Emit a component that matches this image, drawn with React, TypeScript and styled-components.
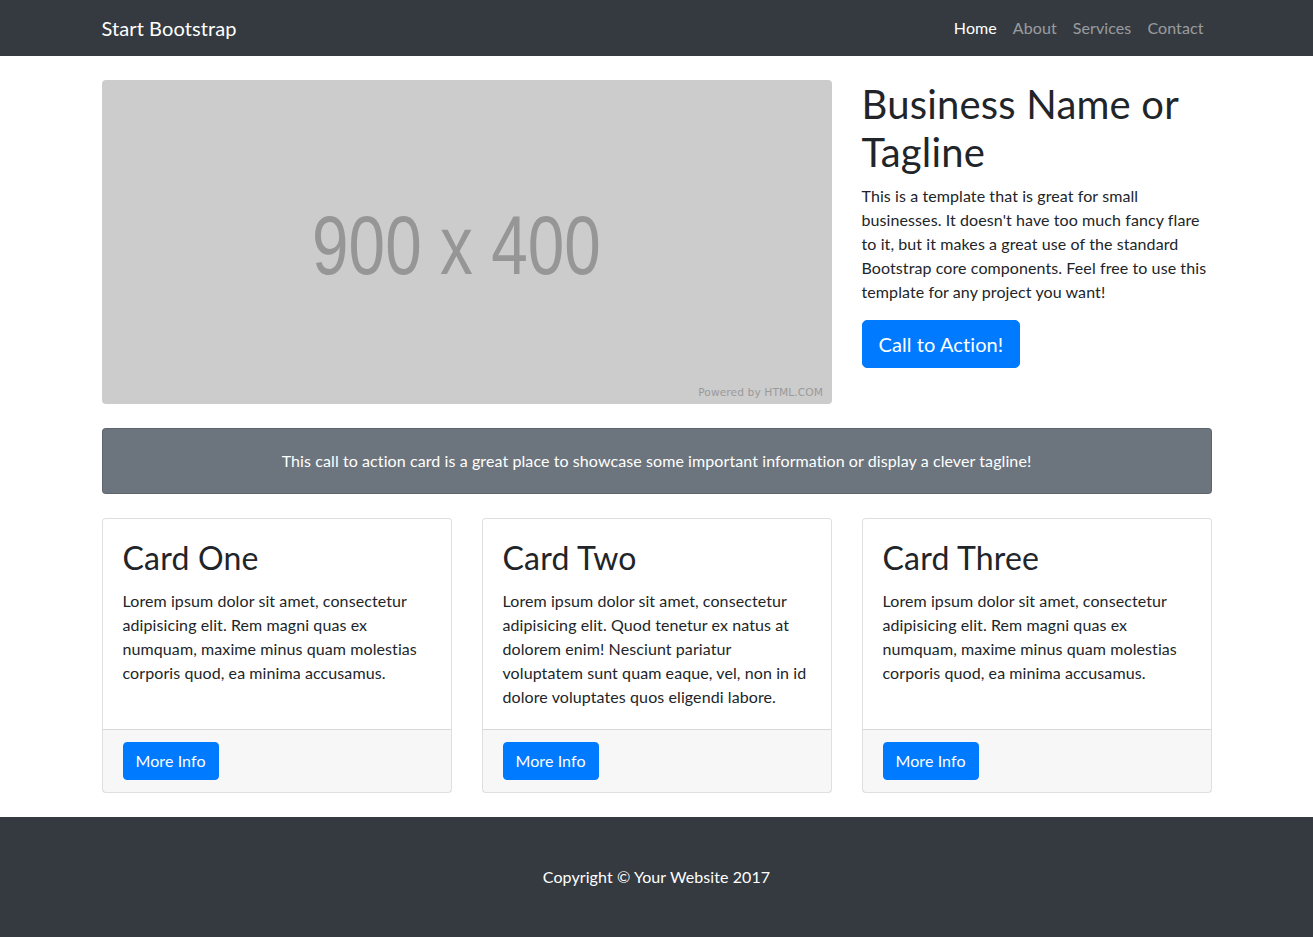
import React from 'react';
import styled, { createGlobalStyle } from 'styled-components';

const GlobalStyle = createGlobalStyle`
  html, body {
    margin: 0;
    padding: 0;
  }
  body {
    font-family: Lato, "Noto Sans", "Liberation Sans", sans-serif;
    font-size: 16px;
    line-height: 1.5;
    letter-spacing: 0.09px;
    color: #212529;
    background: #fff;
  }
  * {
    box-sizing: border-box;
  }
`;

const Container = styled.div`
  width: 1140px;
  margin: 0 auto;
  padding: 0 15px;
`;

const Navbar = styled.nav`
  background: #343a40;
  padding: 8px 0;
`;

const NavInner = styled(Container)`
  display: flex;
  align-items: center;
  justify-content: space-between;
`;

const Brand = styled.a`
  padding: 5px 0;
  color: #fff;
  font-size: 20px;
  line-height: 30px;
  text-decoration: none;
`;

const NavList = styled.ul`
  display: flex;
  margin: 0;
  padding: 0;
  list-style: none;
`;

const NavLink = styled.a<{ active?: boolean }>`
  display: block;
  padding: 8px;
  color: ${({ active }) => (active ? '#fff' : 'rgba(255, 255, 255, 0.5)')};
  font-size: 16px;
  line-height: 24px;
  text-decoration: none;
`;

const HeroRow = styled.div`
  display: grid;
  grid-template-columns: 730px 350px;
  gap: 30px;
  margin: 24px 0;
  align-items: start;
`;

const Placeholder = styled.svg`
  display: block;
  width: 730px;
  height: 324px;
  border-radius: 4px;
`;

const Heading = styled.h1`
  margin: 0 0 8px;
  font-size: 40px;
  font-weight: 400;
  line-height: 1.2;
  letter-spacing: 0.2px;
`;

const Lead = styled.p`
  margin: 0 0 16px;
  font-size: 16px;
  line-height: 24px;
`;

const Button = styled.a<{ large?: boolean }>`
  display: inline-block;
  padding: ${({ large }) => (large ? '8px 16px' : '6px 12px')};
  border: 1px solid #007bff;
  border-radius: ${({ large }) => (large ? '5px' : '4px')};
  background: #007bff;
  color: #fff;
  font-size: ${({ large }) => (large ? '20px' : '16px')};
  line-height: ${({ large }) => (large ? '30px' : '24px')};
  text-decoration: none;
`;

const Callout = styled.div`
  margin: 24px 0;
  padding: 20px;
  border: 1px solid rgba(0, 0, 0, 0.125);
  border-radius: 4px;
  background: #6c757d;
  color: #fff;
  text-align: center;

  p {
    margin: 0;
  }
`;

const CardRow = styled.div`
  display: grid;
  grid-template-columns: repeat(3, 1fr);
  gap: 30px;
  margin-bottom: 24px;
`;

const Card = styled.div`
  display: flex;
  flex-direction: column;
  border: 1px solid rgba(0, 0, 0, 0.125);
  border-radius: 4px;
  background: #fff;
`;

const CardBody = styled.div`
  flex: 1;
  padding: 20px;
`;

const CardTitle = styled.h2`
  margin: 0 0 12px;
  font-size: 32px;
  font-weight: 400;
  line-height: 1.2;
  letter-spacing: 0.2px;
`;

const CardText = styled.p`
  margin: 0;
`;

const CardFooter = styled.div`
  padding: 12px 20px;
  border-top: 1px solid rgba(0, 0, 0, 0.125);
  background: rgba(0, 0, 0, 0.03);
`;

const Footer = styled.footer`
  padding: 48px 0;
  background: #343a40;
  color: #fff;
  text-align: center;

  p {
    margin: 0;
  }
`;

const cards = [
  {
    title: 'Card One',
    text: 'Lorem ipsum dolor sit amet, consectetur adipisicing elit. Rem magni quas ex numquam, maxime minus quam molestias corporis quod, ea minima accusamus.',
  },
  {
    title: 'Card Two',
    text: 'Lorem ipsum dolor sit amet, consectetur adipisicing elit. Quod tenetur ex natus at dolorem enim! Nesciunt pariatur voluptatem sunt quam eaque, vel, non in id dolore voluptates quos eligendi labore.',
  },
  {
    title: 'Card Three',
    text: 'Lorem ipsum dolor sit amet, consectetur adipisicing elit. Rem magni quas ex numquam, maxime minus quam molestias corporis quod, ea minima accusamus.',
  },
];

export default function App() {
  return (
    <>
      <GlobalStyle />
      <Navbar>
        <NavInner>
          <Brand href="#">Start Bootstrap</Brand>
          <NavList>
            <li>
              <NavLink href="#" active>
                Home
              </NavLink>
            </li>
            <li>
              <NavLink href="#">About</NavLink>
            </li>
            <li>
              <NavLink href="#">Services</NavLink>
            </li>
            <li>
              <NavLink href="#">Contact</NavLink>
            </li>
          </NavList>
        </NavInner>
      </Navbar>

      <Container>
        <HeroRow>
          <Placeholder viewBox="0 0 900 400" preserveAspectRatio="none">
            <rect width="900" height="400" fill="#cccccc" />
            <text
              x="259"
              y="240"
              fill="#969696"
              fontFamily="'Liberation Sans', Arial, sans-serif"
              fontSize="104"
              textLength="356"
              lengthAdjust="spacingAndGlyphs"
            >
              900 x 400
            </text>
            <text
              x="735"
              y="390"
              fill="#9a9a9a"
              fontFamily="'DejaVu Sans', sans-serif"
              fontSize="12"
              textLength="154"
              lengthAdjust="spacingAndGlyphs"
            >
              Powered by HTML.COM
            </text>
          </Placeholder>
          <div>
            <Heading>Business Name or Tagline</Heading>
            <Lead>
              This is a template that is great for small businesses. It doesn't
              have too much fancy flare to it, but it makes a great use of the
              standard Bootstrap core components. Feel free to use this template
              for any project you want!
            </Lead>
            <Button href="#" large>
              Call to Action!
            </Button>
          </div>
        </HeroRow>

        <Callout>
          <p>
            This call to action card is a great place to showcase some important
            information or display a clever tagline!
          </p>
        </Callout>

        <CardRow>
          {cards.map((card) => (
            <Card key={card.title}>
              <CardBody>
                <CardTitle>{card.title}</CardTitle>
                <CardText>{card.text}</CardText>
              </CardBody>
              <CardFooter>
                <Button href="#">More Info</Button>
              </CardFooter>
            </Card>
          ))}
        </CardRow>
      </Container>

      <Footer>
        <Container>
          <p>Copyright &copy; Your Website 2017</p>
        </Container>
      </Footer>
    </>
  );
}
